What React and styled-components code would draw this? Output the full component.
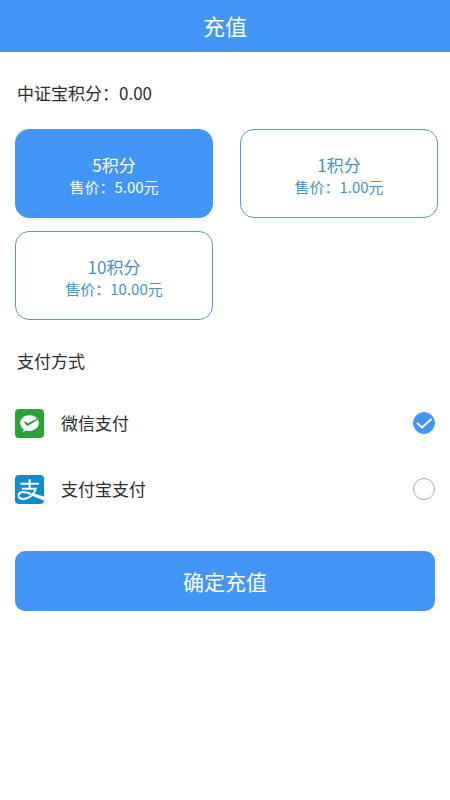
import React, { useState } from "react";
import styled, { createGlobalStyle } from "styled-components";

const blue = "#4396f7";
const outline = "#5e96c4";

const GlobalStyle = createGlobalStyle`
  *, *::before, *::after { box-sizing: border-box; }
  body {
    margin: 0;
    background: #fff;
    color: #2b2b2b;
    font-family: "Noto Sans CJK SC", "Noto Sans", sans-serif;
  }
  button, input { font: inherit; margin: 0; }
`;

const Header = styled.header`
  display: flex;
  align-items: center;
  justify-content: center;
  height: 52px;
  padding-bottom: 2px;
  background: ${blue};
`;

const Title = styled.h1`
  margin: 0;
  color: #fff;
  font-size: 22px;
  font-weight: 400;
  line-height: 32px;
`;

const Main = styled.main`
  display: flex;
  flex-direction: column;
  padding: 28px 15px;
`;

const Label = styled.h2`
  margin: 0;
  padding-left: 2px;
  font-size: 17px;
  font-weight: 400;
  line-height: 26px;
`;

const Packages = styled.div`
  display: grid;
  grid-template-columns: 1fr 1fr;
  gap: 13px 27px;
  margin: 23px -3px 28px 0;
`;

const Package = styled.button`
  display: flex;
  flex-direction: column;
  align-items: center;
  justify-content: center;
  height: 89px;
  padding: 2px 0 0;
  border: 1px solid ${(p) => (p.$selected ? blue : outline)};
  border-radius: 14px;
  background: ${(p) => (p.$selected ? blue : "#fff")};
  color: ${(p) => (p.$selected ? "#fff" : "#4b8fc6")};
  cursor: pointer;
`;

const Points = styled.span`
  font-size: 17px;
  line-height: 24px;
`;

const Price = styled.span`
  font-size: 15px;
  line-height: 20px;
`;

const Methods = styled.div`
  display: flex;
  flex-direction: column;
  margin-top: 16px;
`;

const Method = styled.label`
  display: flex;
  align-items: center;
  height: 66px;
  font-size: 17px;
  line-height: 26px;
  cursor: pointer;
`;

const MethodIcon = styled.svg`
  flex: none;
  width: 29px;
  height: 29px;
  margin-right: 17px;
`;

const RadioBox = styled.span`
  display: grid;
  width: 22px;
  height: 22px;
  margin-left: auto;
  > * { grid-area: 1 / 1; }
`;

const Radio = styled.input`
  appearance: none;
  width: 22px;
  height: 22px;
  border: 1px solid #aaa;
  border-radius: 50%;
  background: #fff;
  cursor: pointer;
  &:checked { border-color: ${blue}; background: ${blue}; }
`;

const Tick = styled.svg`
  width: 22px;
  height: 22px;
  pointer-events: none;
`;

const Submit = styled.button`
  height: 60px;
  margin-top: 29px;
  padding: 0;
  border: 0;
  border-radius: 10px;
  background: ${blue};
  color: #fff;
  font-size: 21px;
  line-height: 30px;
  cursor: pointer;
`;

function WechatIcon() {
  return (
    <MethodIcon viewBox="0 0 29 29" aria-hidden="true">
      <rect width="29" height="29" rx="4" fill="#2ca13a" />
      <path
        fill="#fff"
        d="M14.5 6.2c5.200 0 9.300 3.500 9.300 7.900s-4.100 7.900-9.300 7.900c-1.200 0-2.300-.2-3.300-.5l-3 1.800.5-3.100c-2.100-1.400-3.500-3.600-3.500-6.100 0-4.400 4.100-7.900 9.300-7.900z"
      />
      <path
        fill="#2ca13a"
        d="M9 12.9l1.200-.7 2.700 2 9.800-5 .8 1.100-10.400 6.400c-.6.4-1.200.3-1.600-.3z"
      />
    </MethodIcon>
  );
}

function AlipayIcon() {
  return (
    <MethodIcon viewBox="0 0 29 29" aria-hidden="true">
      <rect width="29" height="29" rx="4" fill="#108bcf" />
      <g fill="none" stroke="#fff" strokeWidth="2">
        <path d="M5.500 8.800h18.500M14.600 4.200v9.500" />
        <path d="M7 13.700h13.800c-1.300 4-3.900 7-6.900 8.700-3.500 1.900-8.700 2.200-10.100-.4-1.200-2.400.7-4.800 4.100-4.900 4.600-.1 8.900 2.600 13.600 3.900" />
      </g>
      <path fill="#fff" d="M18.500 18.500l10.500 3v4l-12-4.700z" />
    </MethodIcon>
  );
}

const packages = [
  { points: 5, price: "5.00" },
  { points: 1, price: "1.00" },
  { points: 10, price: "10.00" },
];

const methods = [
  { id: "wechat", name: "微信支付", Icon: WechatIcon },
  { id: "alipay", name: "支付宝支付", Icon: AlipayIcon },
];

export default function App() {
  const [points, setPoints] = useState(5);
  const [method, setMethod] = useState("wechat");

  return (
    <>
      <GlobalStyle />
      <Header>
        <Title>充值</Title>
      </Header>
      <Main>
        <Label>中证宝积分：0.00</Label>
        <Packages>
          {packages.map((item) => (
            <Package
              key={item.points}
              type="button"
              aria-pressed={points === item.points}
              $selected={points === item.points}
              onClick={() => setPoints(item.points)}
            >
              <Points>{item.points}积分</Points>
              <Price>售价：{item.price}元</Price>
            </Package>
          ))}
        </Packages>
        <Label id="pay-label">支付方式</Label>
        <Methods role="radiogroup" aria-labelledby="pay-label">
          {methods.map(({ id, name, Icon }) => (
            <Method key={id} htmlFor={id}>
              <Icon />
              {name}
              <RadioBox>
                <Radio
                  id={id}
                  type="radio"
                  name="method"
                  checked={method === id}
                  onChange={() => setMethod(id)}
                />
                {method === id && (
                  <Tick viewBox="0 0 22 22" aria-hidden="true">
                    <path d="M4 11l5 4.500 9.500-8.500" fill="none" stroke="#fff" strokeWidth="2" />
                  </Tick>
                )}
              </RadioBox>
            </Method>
          ))}
        </Methods>
        <Submit type="button">确定充值</Submit>
      </Main>
    </>
  );
}
